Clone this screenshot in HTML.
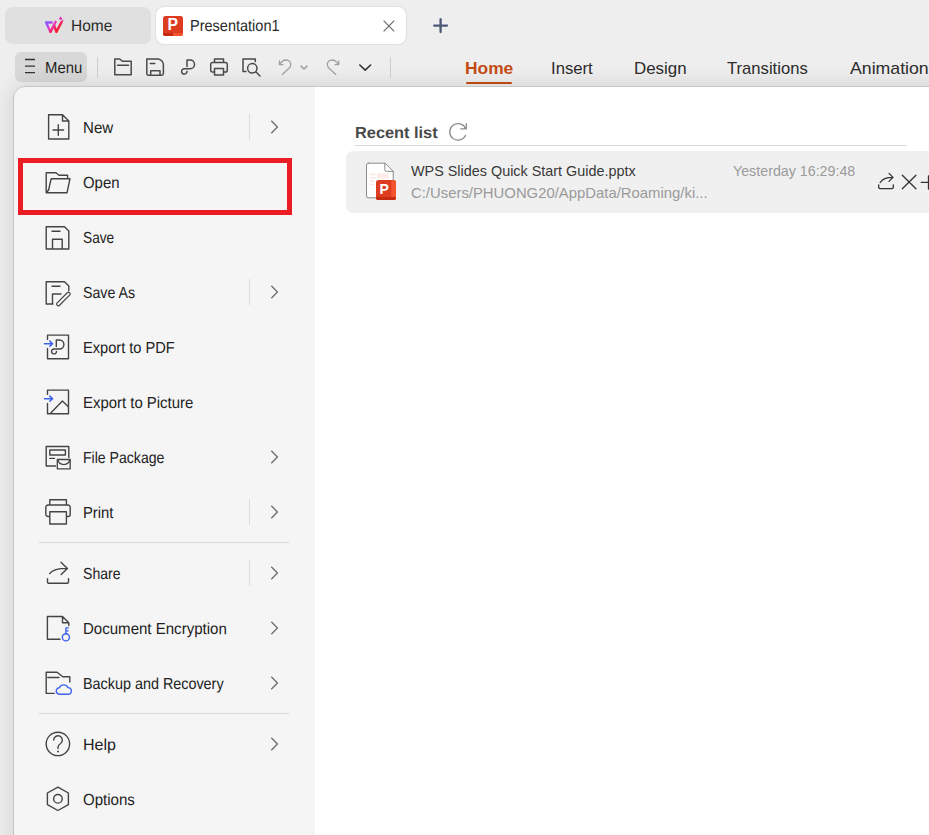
<!DOCTYPE html>
<html lang="en">
<head>
<meta charset="utf-8">
<title>Presentation1</title>
<style>
*{box-sizing:border-box;margin:0;padding:0}
html,body{width:929px;height:835px;overflow:hidden}
body{position:relative;background:#eeeeee;font-family:"Liberation Sans","DejaVu Sans",sans-serif;color:#222;font-size:15px}
.abs{position:absolute}
.t{position:absolute;white-space:nowrap;line-height:20px;transform-origin:0 50%}
svg{position:absolute;overflow:visible}
/* top tabs */
#tabHome{left:5px;top:7px;width:146px;height:37px;background:#e0e0e0;border-radius:8px}
#tabDoc{left:156px;top:7px;width:250px;height:37px;background:#fff;border-radius:8px;box-shadow:0 0 2px rgba(0,0,0,.18)}
#menuBtn{left:15px;top:52px;width:72px;height:30px;background:#d8d8d8;border-radius:6px}
.vsep{position:absolute;width:1px;background:#cfcfcf}
/* main */
#main{left:13px;top:86px;width:940px;height:770px;border-top-left-radius:12px;border:1px solid #c6c6c6;box-shadow:0 0 22px rgba(0,0,0,.13);background:linear-gradient(90deg,#f5f5f5 0,#f5f5f5 301px,#fff 301px)}
.hsep{position:absolute;left:39px;width:250px;height:1px;background:#d9d9d9}
.isep{position:absolute;left:249px;width:1px;height:26px;background:#dcdcdc}
#openBox{left:18px;top:158px;width:274px;height:57px;border:5px solid #ec1c24}
#recentRow{left:346px;top:151px;width:600px;height:61.5px;background:#f0f0f0;border-radius:7px}
#recentLine{left:355px;top:145px;width:551px;height:1px;background:#d6d6d6}
</style>
</head>
<body>
<!-- tab bar -->
<div id="tabHome" class="abs"></div>
<div id="tabDoc" class="abs"></div>

<!-- toolbar -->
<div id="menuBtn" class="abs"></div>
<div class="vsep" style="left:97px;top:57px;height:21px"></div>
<div class="vsep" style="left:390px;top:57px;height:21px"></div>

<!-- ribbon tabs -->
<div class="abs" style="left:466px;top:82px;width:46px;height:2px;background:#c44a12;border-radius:1px"></div>

<!-- main area -->
<div id="main" class="abs"></div>

<!-- menu items -->
<div class="hsep" style="top:542px"></div>
<div class="hsep" style="top:713px"></div>
<div class="isep" style="top:114px"></div>
<div class="isep" style="top:279px"></div>
<div class="isep" style="top:499px"></div>
<div class="isep" style="top:560px"></div>
<div id="openBox" class="abs"></div>

<!-- recent list -->
<div id="recentLine" class="abs"></div>
<div id="recentRow" class="abs"></div>

<!--TEXT-->
<div class="t" style="left:70.8px;top:16px;font-size:16px;color:#2b2b2b;transform:scaleX(0.968) rotate(.05deg)">Home</div>
<div class="t" style="left:189.8px;top:16px;font-size:16px;color:#2a2a2a;transform:scaleX(0.907) rotate(.05deg)">Presentation1</div>
<div class="t" style="left:44.7px;top:58px;font-size:16px;color:#1f1f1f;transform:scaleX(0.929) rotate(.05deg)">Menu</div>
<div class="t" style="left:464.8px;top:59px;font-size:17px;font-weight:bold;color:#c44a12;transform:scaleX(1.022)">Home</div>
<div class="t" style="left:551.0px;top:59px;font-size:17px;color:#2b2b2b;transform:scaleX(0.981)">Insert</div>
<div class="t" style="left:633.8px;top:59px;font-size:17px;color:#2b2b2b;transform:scaleX(0.994)">Design</div>
<div class="t" style="left:727.4px;top:59px;font-size:17px;color:#2b2b2b;transform:scaleX(0.978)">Transitions</div>
<div class="t" style="left:850.0px;top:59px;font-size:17px;color:#2b2b2b;transform:scaleX(1.041)">Animation</div>
<div class="t" style="left:82.7px;top:118px;font-size:16px;color:#222;transform:scaleX(0.942) rotate(.05deg)">New</div>
<div class="t" style="left:83.3px;top:173px;font-size:16px;color:#222;transform:scaleX(0.932) rotate(.05deg)">Open</div>
<div class="t" style="left:82.5px;top:228px;font-size:16px;color:#222;transform:scaleX(0.857) rotate(.05deg)">Save</div>
<div class="t" style="left:82.5px;top:283px;font-size:16px;color:#222;transform:scaleX(0.888) rotate(.05deg)">Save As</div>
<div class="t" style="left:82.7px;top:338px;font-size:16px;color:#222;transform:scaleX(0.913) rotate(.05deg)">Export to PDF</div>
<div class="t" style="left:82.7px;top:393px;font-size:16px;color:#222;transform:scaleX(0.932) rotate(.05deg)">Export to Picture</div>
<div class="t" style="left:82.7px;top:448px;font-size:16px;color:#222;transform:scaleX(0.880) rotate(.05deg)">File Package</div>
<div class="t" style="left:82.7px;top:503px;font-size:16px;color:#222;transform:scaleX(0.925) rotate(.05deg)">Print</div>
<div class="t" style="left:82.5px;top:564px;font-size:16px;color:#222;transform:scaleX(0.880) rotate(.05deg)">Share</div>
<div class="t" style="left:82.7px;top:619px;font-size:16px;color:#222;transform:scaleX(0.940) rotate(.05deg)">Document Encryption</div>
<div class="t" style="left:82.7px;top:674px;font-size:16px;color:#222;transform:scaleX(0.898) rotate(.05deg)">Backup and Recovery</div>
<div class="t" style="left:82.6px;top:735px;font-size:16px;color:#222;transform:scaleX(1.000) rotate(.05deg)">Help</div>
<div class="t" style="left:83.3px;top:790px;font-size:16px;color:#222;transform:scaleX(0.941) rotate(.05deg)">Options</div>
<div class="t" style="left:354.8px;top:123px;font-size:16px;font-weight:bold;color:#484848;transform:scaleX(1.021) rotate(.05deg)">Recent list</div>
<div class="t" style="left:411.3px;top:161px;color:#383838;transform:scaleX(0.959)">WPS Slides Quick Start Guide.pptx</div>
<div class="t" style="left:411.0px;top:183px;color:#9a9a9a;transform:scaleX(0.991)">C:/Users/PHUONG20/AppData/Roaming/ki...</div>
<div class="t" style="left:732.5px;top:161px;color:#9a9a9a;transform:scaleX(0.950)">Yesterday 16:29:48</div>
<!--/TEXT-->
<!--ICONS-->
<svg width="929" height="835" viewBox="0 0 929 835" style="left:0;top:0" fill="none" stroke-linecap="round" stroke-linejoin="round">
<defs>
<linearGradient id="wg" x1="45" y1="20" x2="60" y2="34" gradientUnits="userSpaceOnUse">
<stop offset=".08" stop-color="#8a5cff"/><stop offset=".25" stop-color="#9a52f2"/><stop offset=".4" stop-color="#e246d8"/><stop offset=".6" stop-color="#f02468"/><stop offset=".8" stop-color="#ff2030"/>
</linearGradient>
</defs>
<!-- WPS logo -->
<g stroke="url(#wg)" stroke-width="2.450">
<path d="M54.300 26L56.400 31.900L61.600 22"/>
<path d="M46.100 22.400H51.700M46.100 22.400L50.500 31.900L55.600 21.800"/>
</g>
<path d="M60.600 17L61.200 18L62.200 18.600L61.200 19.200L60.600 20.200L60 19.200L59 18.600L60 18z" fill="#d92bb8" stroke="#d92bb8" stroke-width=".5"/>
<path d="M62.8 19.5L63.2 20.3L64 20.700L63.2 21.100L62.8 21.900L62.4 21.100L61.6 20.700L62.4 20.300z" fill="#f0307a" stroke="none"/>

<!-- P icon in tab -->
<g stroke="none">
<rect x="163" y="16" width="20" height="20" rx="2.5" fill="#dd3c21"/>
<path d="M163 33H173V36H165.500A2.500 2.500 0 0 1 163 33.500z" fill="#c62a10"/>
<path d="M173 33H183V33.500A2.500 2.500 0 0 1 180.500 36H173z" fill="#f5532f"/>
<text x="167.500" y="30" font-family="Liberation Sans, sans-serif" font-weight="bold" font-size="15.800" fill="#fff">P</text>
</g>
<!-- tab close X and plus -->
<path d="M383.600 20.700L394.200 31.300M394.200 20.700L383.600 31.300" stroke="#686868" stroke-width="1.150" stroke-linecap="butt"/>
<path d="M434.200 25.600H447M440.600 19.200V32" stroke="#4a5878" stroke-width="2.300"/>

<!-- hamburger -->
<path d="M25 59.500H35M25 66.100H35M25 72.600H35" stroke="#333" stroke-width="1.300" stroke-linecap="butt"/>

<!-- toolbar icons -->
<g stroke="#4a4a4a" stroke-width="1.500">
<!-- folder -->
<path d="M114.800 59H119.800L122.300 61.300H131.200V74.800H114.800zM117.500 65.200H128.500"/>
<!-- save -->
<path d="M150.500 75.200H148.500A1.700 1.700 0 0 1 146.800 73.500V58.900H158.200Q163.300 60.500 163.400 65V73.500A1.700 1.700 0 0 1 161.700 75.200H160M150.300 63.500H154.800M150.700 70.800H160V75.200H150.700z"/>
<!-- pdf -->
<path d="M187 66.500V60.100H190.200A4.300 4.300 0 0 1 190.200 68.700H184.300A2.700 2.700 0 1 0 187 71.300"/>
<!-- printer -->
<path d="M214.500 62.500V58.900H223.500V62.500M214.500 72H212.500A1.800 1.800 0 0 1 210.700 70.200V64.300A1.800 1.800 0 0 1 212.500 62.500H225.500A1.800 1.800 0 0 1 227.300 64.300V70.200A1.800 1.800 0 0 1 225.500 72H223.500M214.500 68.600H223.500V75H214.500z"/>
<!-- preview -->
<path d="M255.300 61.500V59H243V71.500H246"/>
<circle cx="252.300" cy="68.300" r="4.700"/>
<path d="M255.800 71.800L260 76"/>
</g>
<!-- undo / redo -->
<g stroke="#a0a0a0" stroke-width="1.300">
<path d="M279.4 61V64.6H283M279.8 64.4C281.5 61.5 284 60 286 60C288.8 60 290.8 62 290.8 64.6C290.8 66.5 290 67.5 288.5 68.8L282.3 74.4"/>
<path d="M301 66.200L304 69L307 66.200" stroke-width="1.600"/>
<path d="M338.7 61 V64.6 H335.1 M338.3 64.4 C336.6 61.5 334.1 60 332.1 60 C329.3 60 327.3 62 327.3 64.6 C327.3 66.5 328.1 67.5 329.6 68.8 L335.8 74.4"/>
</g>
<path d="M359.800 65L365.200 70.200L370.600 65" stroke="#333" stroke-width="1.600"/>

<!-- menu icons -->
<g stroke="#444" stroke-width="1.400">
<!-- New -->
<path d="M62.500 114.700H48.600V139H68.800V121zM62.500 114.700V121H68.800M53 130H63.600M58.300 124.700V135.300"/>
<!-- Open -->
<path d="M46.200 192.800V172.700H56L59 175.300H67.600V178M51.200 178.700H70L67 192.800H46.200L48.600 190L51.200 178.700"/>
<!-- Save -->
<path d="M46.200 226.700H64.500L68.800 231V249H46.200zM52 231.300H60M52.500 249V239.200H62.200V249"/>
<!-- Save As -->
<path d="M53 304H46.200V281.700H64.500L68.800 286V290.500M52 286.300H60M52.500 304V294H61"/>
<rect x="54.700" y="297.350" width="17.400" height="3.300" rx="1.200" transform="rotate(-45 63.400 299)" stroke-width="1.200"/>
<!-- Export to PDF -->
<path d="M47.500 339.400V335.100H68.500V358.800H47.500V348.500"/>
<path d="M56.300 346.500V340H59.400A4.500 4.500 0 0 1 59.400 349H54A2.450 2.450 0 1 0 56.450 351.400" stroke-width="1.400"/>
<!-- Export to Picture -->
<path d="M47.500 394.400V390.100H68.500V413.800H47.500V403.500M50.300 413.500L62.400 401.100L68.300 406.700"/>
<!-- File Package -->
<path d="M55.500 466H46.200V446.500H68.800V457.500M49.800 450H65.400V455H49.800zM49.800 458.400H54.500"/>
<path d="M57.300 459.500H70.200V468.800H57.300zM58 460.200A5.900 5.300 0 0 0 69.600 460.200" stroke-width="1.300"/>
<!-- Print -->
<path d="M49.800 505V499.800H66.400V505M49.800 516.500H48A2.200 2.200 0 0 1 45.800 514.300V507.200A2.200 2.200 0 0 1 48 505H68A2.200 2.200 0 0 1 70.200 507.200V514.300A2.200 2.200 0 0 1 68 516.500H66.400M49.800 511.800H66.400V524H49.800z"/>
<!-- Share -->
<path d="M47.500 578.800V582A1.300 1.300 0 0 0 48.800 583.300H67.200A1.300 1.300 0 0 0 68.500 582V578.800M49.600 573.600C53 569.500 58.500 568.300 67 568.400M61 562.300L67.400 568.400L61.200 574.500"/>
<!-- Document Encryption -->
<path d="M60 639.300H47.400V616.500H62.500L68.800 622.800V625.500M62.500 616.500V622.800H68.800"/>
<!-- Backup -->
<path d="M54.200 693.400H46.200V672.300H57L62.800 676.800H69.800V682M47.800 677.500H59"/>
<!-- Help -->
<circle cx="57.900" cy="743.900" r="11.700"/>
<path d="M53.700 740A4.300 4.300 0 1 1 60.600 743.500C58.800 744.800 58 745.600 58 747.200V748.400"/>
<!-- Options -->
<path d="M57.900 787.200L68.400 793V804.700L57.900 810.500L47.400 804.700V793z"/>
<circle cx="57.900" cy="798.800" r="4.300"/>
</g>
<circle cx="58" cy="751.500" r="1" fill="#444"/>
<!-- blue accents -->
<g stroke="#3d63ee" stroke-width="1.400">
<path d="M44.500 343.700H52.300M49.800 341.100L52.600 343.700L49.800 346.300" stroke-width="1.550"/>
<path d="M44.500 398.700H52.300M49.800 396.100L52.600 398.700L49.800 401.300" stroke-width="1.550"/>
<circle cx="65.900" cy="637.300" r="3.550"/>
<path d="M65.900 633.700V627.900H68.300M65.900 630.900H68"/>
<path d="M59.600 694.200A3.250 3.250 0 0 1 59.400 687.700A4.700 4.700 0 0 1 68 687.600A3.300 3.300 0 0 1 68 694.200z"/>
</g>
<!-- chevrons -->
<g stroke="#727272" stroke-width="1.400" stroke-linecap="butt" stroke-linejoin="miter">
<path d="M271.300 120.7L277.400 127.0L271.300 133.3"/>
<path d="M271.300 285.7L277.400 292.0L271.300 298.3"/>
<path d="M271.300 450.7L277.400 457.0L271.300 463.3"/>
<path d="M271.300 505.7L277.400 512.0L271.300 518.3"/>
<path d="M271.300 566.7L277.400 573.0L271.300 579.3"/>
<path d="M271.300 621.7L277.400 628.0L271.300 634.3"/>
<path d="M271.300 676.7L277.400 683.0L271.300 689.3"/>
<path d="M271.300 737.7L277.400 744.0L271.300 750.3"/>
</g>

<!-- recent list refresh -->
<path d="M465.700 128.700A8.300 8.300 0 1 0 465.600 135.300M466.300 123.500V128.800H460.800" stroke="#878c92" stroke-width="1.250"/>
<!-- file icon -->
<g stroke="none">
<path d="M368.300 163.200H385L393.200 171.200V196A1.800 1.800 0 0 1 391.400 197.800H368.300A1.800 1.800 0 0 1 366.500 196V165A1.800 1.800 0 0 1 368.300 163.200z" fill="#fff" stroke="#8a8a8a" stroke-width="1"/>
<path d="M384.800 163.300V169.800A1.500 1.500 0 0 0 386.300 171.300H393.100" fill="none" stroke="#8a8a8a" stroke-width="1"/>
<rect x="377" y="173.500" width="12" height="5" fill="#fdebe8"/>
<rect x="370" y="173.800" width="6" height="1.300" fill="#fde3df"/>
<rect x="370" y="177.200" width="6" height="1.300" fill="#fde3df"/>
<rect x="370" y="180.500" width="4.200" height="1.300" fill="#fde3df"/>
<rect x="370" y="183.800" width="4.200" height="1.300" fill="#fde3df"/>
<rect x="376" y="180" width="20" height="20" rx="2.600" fill="#dd3c21"/>
<path d="M391.300 180H393.400A2.600 2.600 0 0 1 396 182.600V197.400A2.600 2.600 0 0 1 393.400 200H391.300z" fill="#f5532f"/>
<path d="M376 197H396V197.400A2.600 2.600 0 0 1 393.400 200H378.600A2.600 2.600 0 0 1 376 197.400z" fill="#c62a10"/>
<text x="379.400" y="194" font-family="Liberation Sans, sans-serif" font-weight="bold" font-size="14" fill="#fff">P</text>
</g>
<!-- row actions -->
<g stroke="#333" stroke-width="1.300">
<path d="M878.700 184.800V187.300A1.300 1.300 0 0 0 880 188.600H892A1.300 1.300 0 0 0 893.300 187.300V184.800M880.200 182.500C882.500 179 887 177.300 892.800 177.400M889 173.400L893 177.400L889 181.400"/>
<path d="M902.300 175.300L915.900 188.700M915.900 175.300L902.300 188.700"/>
<path d="M921.200 182.300H931M928.500 175.800V189"/>
</g>
</svg>
<!--/ICONS-->
</body>
</html>
